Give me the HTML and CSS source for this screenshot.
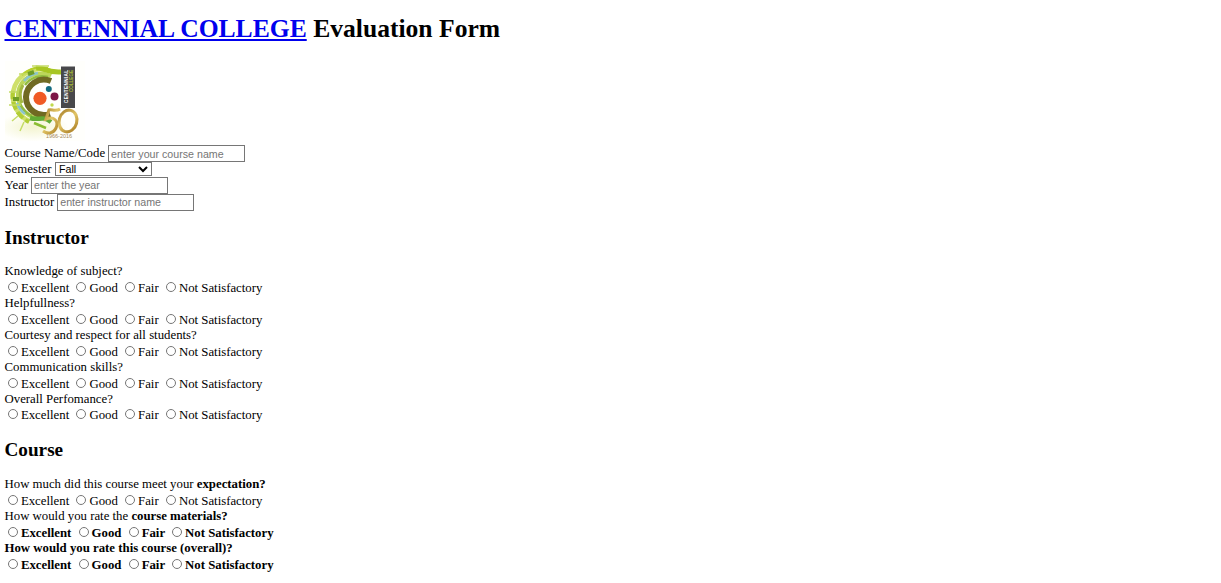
FILE: index.html
```html
<!DOCTYPE html>
<html lang="en">
<head>
<meta charset="utf-8">
<title>Evaluation Form</title>
<link rel="stylesheet" href="styles.css">
</head>
<body>
<h1 class="title"><a href="#">CENTENNIAL COLLEGE</a> Evaluation Form</h1>
<svg class="logo" viewBox="0 0 80 80" role="img" aria-label="Centennial College 50 years">
  <defs>
    <linearGradient id="gold" x1="0" y1="0" x2="1" y2="1">
      <stop offset="0" stop-color="#a57c26"/><stop offset=".45" stop-color="#e2c566"/><stop offset="1" stop-color="#a87a20"/>
    </linearGradient>
    <radialGradient id="glow"><stop offset="0" stop-color="#f3f4cf"/><stop offset="1" stop-color="#f3f4cf" stop-opacity="0"/></radialGradient>
    <filter id="soft" x="-5%" y="-5%" width="110%" height="110%"><feGaussianBlur stdDeviation=".45"/></filter>
  </defs>
  <rect width="80" height="80" fill="#fffffc"/>
  <ellipse cx="28" cy="66" rx="36" ry="14" fill="url(#glow)"/>
  <g fill="none" filter="url(#soft)">
    <path d="M48 11A28 28 0 0 0 8 31A28 28 0 0 0 24 60" stroke="#cfe06a" stroke-width="4.5"/>
    <path d="M43 7A29 29 0 0 0 17 14" stroke="#b6cf2b" stroke-width="2"/>
    <path d="M8 30A29 29 0 0 0 24 61" stroke="#b2cd35" stroke-width="4" stroke-dasharray="8 3"/>
    <path d="M46 15A23 23 0 0 0 13 32A23 23 0 0 0 32 57" stroke="#bcd65a" stroke-width="4"/>
    <path d="M43 16A21 21 0 0 0 20 24M15 43A23 23 0 0 0 27 55" stroke="#92bd3f" stroke-width="2.5"/>
    <path d="M33 12A23 23 0 0 0 19 20M12 42A24 24 0 0 0 20 53" stroke="#8bc4cd" stroke-width="2.5"/>
    <path d="M18 24A20 20 0 0 0 17 42" stroke="#a3b943" stroke-width="3"/>
    <path d="M46 20A18 18 0 0 0 21 36A18 18 0 0 0 45 53" stroke="#6f6a22" stroke-width="6"/>
    <path d="M31 7C38 6 41 12 56 11" stroke="#a8c621" stroke-width="5"/>
    <path d="M27 5h17M14 13h11M4 31h8M4 44h12M19 61l-4 9M13 55l-6 5" stroke="#c5dc67" stroke-width="1.5"/>
    <path d="M25 57C34 60 37 54 46 61" stroke="#62ac35" stroke-width="4.5"/>
    <path d="M29 62l12 5" stroke="#8bbd32" stroke-width="2.5"/>
    <path d="M8 38h6M23 13l6-2" stroke="#6f9e28" stroke-width="4"/>
  </g>
  <circle cx="35" cy="37.3" r="6.6" fill="#f05a24"/>
  <circle cx="43.8" cy="28" r="3" fill="#126b80"/>
  <circle cx="49.5" cy="35.5" r="4" fill="#7c1745"/>
  <circle cx="47" cy="44" r="1.7" fill="#c0d94b"/>
  <rect x="56" y="5.5" width="14" height="41.5" fill="#48484a"/>
  <g transform="rotate(-90)" class="logo-name">
    <text x="-42" y="62.8" textLength="33" lengthAdjust="spacing" fill="#fff">CENTENNIAL</text>
    <text x="-31" y="67.8" textLength="22" lengthAdjust="spacing" fill="#a9ba36">COLLEGE</text>
  </g>
  <g fill="none" stroke="url(#gold)" filter="url(#soft)">
    <path d="M55 48C50 51 47 48 44 49L41 58C49 55 54 60 51 67C48 73 42 73 38 70" stroke-width="3"/>
    <ellipse cx="63" cy="60" rx="8.8" ry="11" stroke-width="3.1" transform="rotate(15 63 60)"/>
  </g>
  <text class="logo-years" x="41" y="76.8" textLength="26" lengthAdjust="spacingAndGlyphs">1966-2016</text>
</svg>
<form>
  <div class="field"><label for="course">Course Name/Code</label><input id="course" type="text" placeholder="enter your course name"></div>
  <div class="field short"><label for="semester">Semester</label><span class="picker"><select id="semester"><option>Fall</option><option>Winter</option><option>Summer</option></select></span></div>
  <div class="field raised"><label for="year">Year</label><input id="year" type="text" placeholder="enter the year"></div>
  <div class="field raised"><label for="instructor">Instructor</label><input id="instructor" type="text" placeholder="enter instructor name"></div>

  <h2 class="section">Instructor</h2>
  <div class="question">Knowledge of subject?</div>
  <div class="options"><label><input type="radio" name="q1">Excellent</label> <label><input type="radio" name="q1">Good</label> <label><input type="radio" name="q1">Fair</label> <label><input type="radio" name="q1">Not Satisfactory</label></div>
  <div class="question">Helpfullness?</div>
  <div class="options"><label><input type="radio" name="q2">Excellent</label> <label><input type="radio" name="q2">Good</label> <label><input type="radio" name="q2">Fair</label> <label><input type="radio" name="q2">Not Satisfactory</label></div>
  <div class="question">Courtesy and respect for all students?</div>
  <div class="options"><label><input type="radio" name="q3">Excellent</label> <label><input type="radio" name="q3">Good</label> <label><input type="radio" name="q3">Fair</label> <label><input type="radio" name="q3">Not Satisfactory</label></div>
  <div class="question">Communication skills?</div>
  <div class="options"><label><input type="radio" name="q4">Excellent</label> <label><input type="radio" name="q4">Good</label> <label><input type="radio" name="q4">Fair</label> <label><input type="radio" name="q4">Not Satisfactory</label></div>
  <div class="question tight">Overall Perfomance?</div>
  <div class="options"><label><input type="radio" name="q5">Excellent</label> <label><input type="radio" name="q5">Good</label> <label><input type="radio" name="q5">Fair</label> <label><input type="radio" name="q5">Not Satisfactory</label></div>

  <h2 class="section course">Course</h2>
  <div class="question">How much did this course meet your <b>expectation?</b></div>
  <div class="options"><label><input type="radio" name="q6">Excellent</label> <label><input type="radio" name="q6">Good</label> <label><input type="radio" name="q6">Fair</label> <label><input type="radio" name="q6">Not Satisfactory</label></div>
  <div class="question">How would you rate the <b>course materials?</b></div>
  <div class="options strong"><label><input type="radio" name="q7">Excellent</label> <label><input type="radio" name="q7">Good</label> <label><input type="radio" name="q7">Fair</label> <label><input type="radio" name="q7">Not Satisfactory</label></div>
  <div class="question strong">How would you rate this course (overall)?</div>
  <div class="options strong"><label><input type="radio" name="q8">Excellent</label> <label><input type="radio" name="q8">Good</label> <label><input type="radio" name="q8">Fair</label> <label><input type="radio" name="q8">Not Satisfactory</label></div>
</form>
</body>
</html>
```
FILE: styles.css
```css
* { box-sizing: border-box; }
html { overflow: hidden; }
body {
  margin: 0;
  padding: 14px 4.5px 0;
  background: #fff;
  color: #000;
  font: 12.8px/15px "Liberation Serif", "Times New Roman", serif;
}
.title { margin: 0 0 17px; font-size: 25.6px; line-height: 30px; }
.title a { color: #0000ee; }
.logo { display: block; width: 80px; height: 80px; margin: 0 0 4px; }
.logo-name { font: bold 4.6px "Liberation Sans", sans-serif; }
.logo-years { font: 5px "Liberation Sans", sans-serif; fill: #a58a58; }
.field { display: flex; gap: 3px; height: 17px; align-items: flex-start; }
.field.short { height: 15px; }
.field label { line-height: 16px; }
.field.short label { line-height: 14px; }
.field input, .field select {
  margin: 0;
  border: 1px solid #767676;
  border-radius: 0;
  background: #fff;
  font: 10.67px "Liberation Sans", Arial, sans-serif;
}
.field input { width: 137px; height: 17px; padding: 1px 2px; }
.field.raised input { padding: 0 2px 2px; }
.field input::placeholder { color: #757575; }
.picker { display: block; width: 97px; height: 14px; margin-left: .6px; border: 1px solid #767676; overflow: hidden; }
.picker select { display: block; width: 96px; height: 14px; margin: -1px 0 0 -1px; padding: 0; border: 0; color: #000; }
.section { margin: 16px 0 15px; font-size: 19.2px; line-height: 22px; }
.section.course { margin: 16px 0 16px; }
.question { height: 15px; white-space: nowrap; }
.question.tight { height: 14px; }
.options { height: 17px; line-height: 19px; white-space: nowrap; }
.options input { width: 10px; height: 10px; margin: 0 3px 0 4px; vertical-align: -.3px; }
.options label:first-child input { margin-left: 3.4px; }
.strong { font-weight: bold; }
```
